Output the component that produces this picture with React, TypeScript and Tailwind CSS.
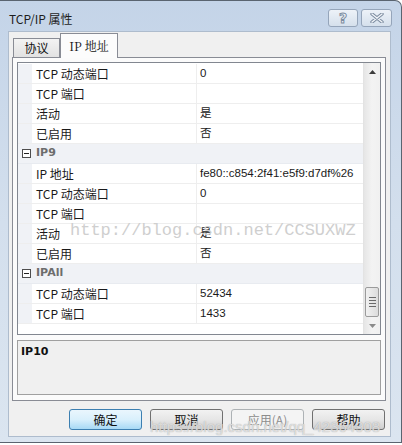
import React from 'react';

type Row = { cat?: string; n?: string; v?: string };

const rows: Row[] = [
  { n: 'TCP 动态端口', v: '0' },
  { n: 'TCP 端口', v: '' },
  { n: '活动', v: '是' },
  { n: '已启用', v: '否' },
  { cat: 'IP9' },
  { n: 'IP 地址', v: 'fe80::c854:2f41:e5f9:d7df%26' },
  { n: 'TCP 动态端口', v: '0' },
  { n: 'TCP 端口', v: '' },
  { n: '活动', v: '是' },
  { n: '已启用', v: '否' },
  { cat: 'IPAll' },
  { n: 'TCP 动态端口', v: '52434' },
  { n: 'TCP 端口', v: '1433' },
];

const ui = "[font-family:'Noto_Sans_CJK_SC','Liberation_Sans',sans-serif]";

const MinusBox = () => (
  <div className="w-[9px] h-[9px] border border-[#4d4d4d] bg-white flex items-center justify-center">
    <div className="w-[5px] h-px bg-[#222]" />
  </div>
);

const GridRow = ({ row }: { row: Row }) => {
  if (row.cat) {
    return (
      <div className="flex h-[20px] bg-[#f0f2f6] border-b border-[#e8ebf0]">
        <div className="w-[14px] flex items-center justify-center pl-[2px]">
          <MinusBox />
        </div>
        <div className="flex-1 flex items-center pl-[4px] text-[11px] font-bold text-[#6d6d6d] [font-family:'DejaVu_Sans',sans-serif]">
          {row.cat}
        </div>
      </div>
    );
  }
  return (
    <div className="flex h-[20px] border-b border-[#eeeeee]">
      <div className="w-[14px] bg-[#f0f2f6]" />
      <div className="w-[165px] flex items-center pl-[4px] border-r border-[#eeeeee] bg-white text-[12px] text-[#1a1a1a] leading-none">
        {row.n}
      </div>
      <div className="flex-1 flex items-center pl-[3px] bg-white text-[11.5px] text-[#1a1a1a] leading-none [font-family:'Liberation_Sans','Noto_Sans_CJK_SC',sans-serif]">
        {row.v}
      </div>
    </div>
  );
};

const Scrollbar = () => (
  <div className="w-[17px] flex flex-col bg-gradient-to-r from-[#e6e6e6] via-[#f3f3f3] to-[#f0f0f0] border-l border-[#e3e3e3]">
    <div className="h-[17px] flex items-center justify-center">
      <svg width="7" height="4" viewBox="0 0 7 4">
        <path d="M0 4 L3.5 0 L7 4 Z" fill="#3c3c3c" />
      </svg>
    </div>
    <div className="flex-1" />
    <div className="h-[30px] mx-px rounded-[2px] border border-[#9b9b9b] bg-gradient-to-r from-[#f1f1f1] to-[#dcdcdc] flex flex-col items-center justify-center gap-[2px]">
      <div className="w-[7px] h-px bg-[#6a6a6a]" />
      <div className="w-[7px] h-px bg-[#6a6a6a]" />
      <div className="w-[7px] h-px bg-[#6a6a6a]" />
      <div className="w-[7px] h-px bg-[#6a6a6a]" />
    </div>
    <div className="h-[17px] flex items-center justify-center">
      <svg width="7" height="4" viewBox="0 0 7 4">
        <path d="M0 0 L3.5 4 L7 0 Z" fill="#8a8a8a" />
      </svg>
    </div>
  </div>
);

const Btn = ({ label, kind }: { label: string; kind?: 'default' | 'disabled' }) => {
  const cls =
    kind === 'default'
      ? 'border-[#3c7fb1] bg-gradient-to-b from-[#eaf6fd] via-[#d9f0fc] to-[#a7d9f5] text-[#111]'
      : kind === 'disabled'
      ? 'border-[#adb2b5] bg-[#f4f4f4] text-[#8d8d8d]'
      : 'border-[#707070] bg-gradient-to-b from-[#f2f2f2] via-[#e6e6e6] to-[#cfcfcf] text-[#111]';
  return (
    <div className={`w-[73px] h-[21px] rounded-[3px] border flex items-center justify-center text-[12px] leading-none ${cls}`}>
      {label}
    </div>
  );
};

export default function App() {
  return (
    <div className={`w-[402px] h-[445px] bg-white ${ui}`}>
      <div className="relative w-[402px] h-[443px] flex flex-col bg-gradient-to-b from-[#c4d4e8] via-[#d3dfed] to-[#dbe5f0] border-t border-r border-b border-[#5a6470] rounded-tr-[7px]">
        {/* title bar */}
        <div className="h-[30px] flex items-start justify-between pl-[9px] pr-[9px]">
          <div className="pt-[12px] text-[12px] leading-none text-[#1e1e1e]">TCP/IP 属性</div>
          <div className="flex gap-[3px] pt-[8px]">
            <div className="w-[30px] h-[18px] rounded-[3px] border border-[#95a5ba] bg-gradient-to-b from-[#edf2f8] to-[#d5e0ec] flex items-center justify-center text-[14px] font-bold leading-none text-[#f2f5f9] [-webkit-text-stroke:1px_#7d8da1] [font-family:'DejaVu_Sans',sans-serif]">
              ?
            </div>
            <div className="w-[31px] h-[18px] rounded-[3px] border border-[#95a5ba] bg-gradient-to-b from-[#edf2f8] to-[#d5e0ec] flex items-center justify-center">
              <svg width="14" height="10" viewBox="0 0 14 10">
                <path d="M2 1 L12 9 M12 1 L2 9" stroke="#7d8da1" strokeWidth="3.4" strokeLinecap="round" />
                <path d="M2 1 L12 9 M12 1 L2 9" stroke="#f2f5f9" strokeWidth="1.4" strokeLinecap="round" />
              </svg>
            </div>
          </div>
        </div>

        {/* client area */}
        <div className="ml-[8px] mr-[10px] h-[406px] bg-[#f0f0f0] border border-[#aebccd] flex flex-col pl-[3px] pr-[4px] pt-[1px]">
          {/* tabs */}
          <div className="flex items-end h-[24px] pl-px">
            <div className="w-[47px] h-[19px] border border-b-0 border-[#898c95] bg-gradient-to-b from-[#f3f3f3] to-[#e2e2e2] flex items-center justify-center text-[12px] leading-none text-[#111]">
              协议
            </div>
            <div className="relative z-10 -mb-px w-[58px] h-[25px] border border-b-0 border-[#898c95] bg-[#fcfcfc] flex items-center justify-center text-[12px] leading-none text-[#111] [font-family:'Noto_Serif_CJK_SC','Liberation_Serif','Noto_Sans_CJK_SC',serif]">
              IP 地址
            </div>
          </div>

          {/* tab panel */}
          <div className="h-[344px] border border-[#898c95] bg-[#fbfbfb] flex flex-col px-[4px] pt-[4px] gap-[5px]">
            {/* property grid */}
            <div className="h-[273px] border border-[#828790] bg-white flex">
              <div className="flex-1 flex flex-col pt-px overflow-hidden">
                {rows.map((r, i) => (
                  <GridRow key={i} row={r} />
                ))}
              </div>
              <Scrollbar />
            </div>
            {/* description */}
            <div className="h-[55px] border border-[#a0a0a0] bg-[#f0f0f0] pl-[3px] pt-[5px] text-[11px] font-bold leading-none text-[#111] [font-family:'DejaVu_Sans',sans-serif]">
              IP10
            </div>
          </div>

          {/* buttons */}
          <div className="flex justify-end gap-[8px] mt-[8px] pr-px">
            <Btn label="确定" kind="default" />
            <Btn label="取消" />
            <Btn label="应用(A)" kind="disabled" />
            <Btn label="帮助" />
          </div>
        </div>

        {/* watermarks */}
        <div className="absolute left-[70px] top-[221px] text-[17px] leading-none text-[#cfcfcf] [font-family:'Liberation_Mono',monospace] pointer-events-none">
          http://blog.csdn.net/CCSUXWZ
        </div>
        <div className="absolute left-[150px] top-[418px] text-[15px] leading-none text-white/60 [text-shadow:0_0_1px_#9a9a9a] [font-family:'Liberation_Sans',sans-serif] pointer-events-none">
          https://blog.csdn.net/qq_42364908
        </div>
      </div>
    </div>
  );
}
